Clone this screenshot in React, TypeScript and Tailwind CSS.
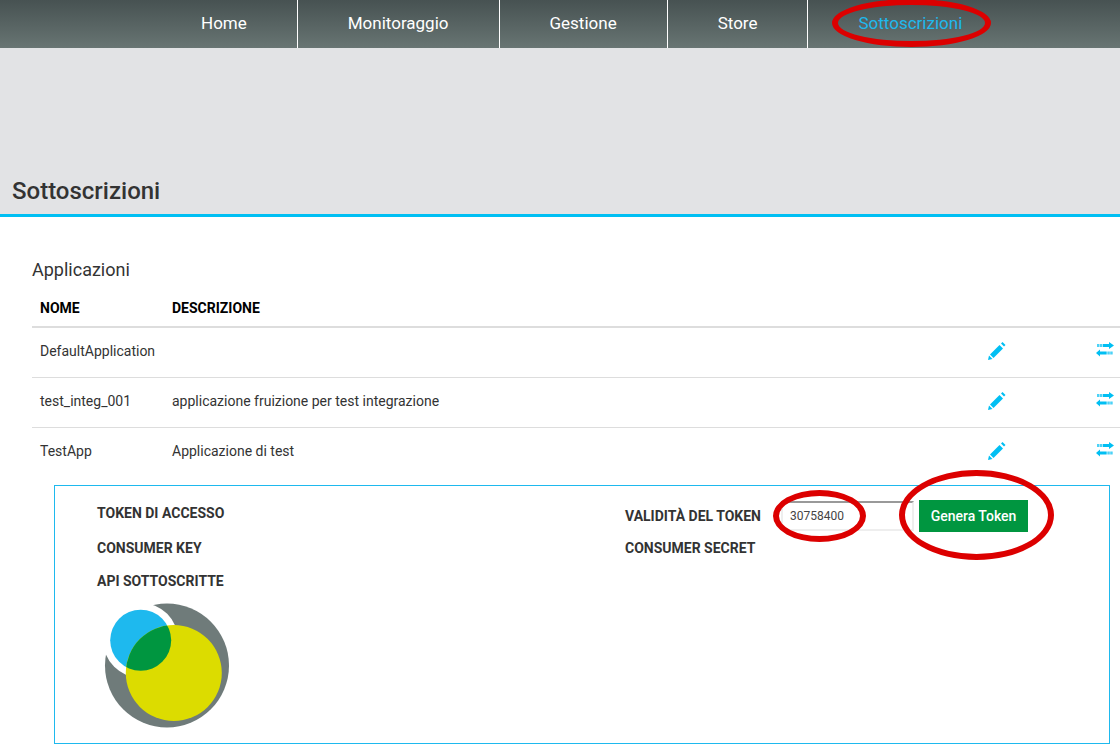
const navItems = ["Home", "Monitoraggio", "Gestione", "Store"];

const apps = [
    { name: "DefaultApplication", description: "" },
    { name: "test_integ_001", description: "applicazione fruizione per test integrazione" },
    { name: "TestApp", description: "Applicazione di test" },
];

function EditIcon() {
    return (
        <svg width="24" height="24" viewBox="0 0 24 24" fill="#00bff3">
            <path d="M4 21l1-4.5 3.5 3.5z" />
            <path d="M6 15.5L15.5 6l3.5 3.5L9.5 19z" />
            <path d="M17 4.5L18.5 3l3 3L20 7.5z" />
        </svg>
    );
}

function SwapIcon() {
    return (
        <svg width="20" height="18" viewBox="0 0 20 18" fill="#00bff3">
            <rect x="2" y="2" width="2.5" height="3" opacity="0.7" />
            <rect x="5" y="2" width="2.5" height="3" opacity="0.7" />
            <path d="M8 2h6V0l5 3.5L14 7V5H8z" />
            <path d="M11.7 9.5H5v-2L1 11l4 3.5v-2h6.7z" />
            <rect x="12.3" y="9.5" width="2.5" height="3" opacity="0.7" />
            <rect x="15.2" y="9.5" width="2.5" height="3" opacity="0.7" />
        </svg>
    );
}

function Logo() {
    return (
        <svg width="130" height="130" viewBox="0 0 130 130">
            <defs>
                <clipPath id="blue-clip">
                    <circle cx="38.7" cy="40.3" r="30.5" />
                </clipPath>
            </defs>
            <circle cx="65" cy="65.5" r="62" fill="#6f7b7a" />
            <circle cx="38.7" cy="40.3" r="37.5" fill="#ffffff" />
            <circle cx="38.7" cy="40.3" r="30.5" fill="#1eb9ee" />
            <circle cx="71.8" cy="73" r="48" fill="#dcdc00" />
            <circle cx="71.8" cy="73" r="48" fill="#009640" clipPath="url(#blue-clip)" />
        </svg>
    );
}

export default function App() {
    return (
        <div className="relative h-[750px] overflow-hidden bg-white font-['Roboto',sans-serif] text-[#333]">
            <nav className="flex h-12 bg-gradient-to-b from-[#475252] to-[#687573] pl-[151px] text-white">
                {navItems.map((item) => (
                    <a key={item} className="flex items-center border-r border-white px-[50px] text-[17px]">
                        {item}
                    </a>
                ))}
                <a className="flex items-center px-[50px] text-[17px] text-[#1eb9ee]">Sottoscrizioni</a>
            </nav>

            <header className="flex h-[169px] items-end border-b-[3px] border-[#00bff3] bg-[#e2e3e5] px-3 pb-[7px]">
                <h1 className="text-2xl font-medium text-[#333]">Sottoscrizioni</h1>
            </header>

            <main className="pl-8 pt-[41px]">
                <h2 className="text-lg font-normal leading-6">Applicazioni</h2>

                <div className="mt-1 grid h-[42px] grid-cols-[132px_812px_111px_25px] items-center border-b-2 border-[#ddd] px-2 pt-1 text-sm font-bold text-black">
                    <div>NOME</div>
                    <div>DESCRIZIONE</div>
                </div>

                {apps.map((app) => (
                    <div
                        key={app.name}
                        className="grid h-[50px] grid-cols-[132px_812px_111px_25px] items-center border-b border-[#ddd] px-2 pb-[3px] text-sm last-of-type:border-transparent"
                    >
                        <div>{app.name}</div>
                        <div>{app.description}</div>
                        <EditIcon />
                        <SwapIcon />
                    </div>
                ))}

                <section className="ml-[22px] mt-[7px] h-[259px] w-[1056px] border border-[#1eb9ee] pl-[42px] pt-[14px] text-sm font-bold">
                    <div className="flex">
                        <div className="w-[528px] pt-[3px]">TOKEN DI ACCESSO</div>
                        <div className="flex h-8 items-center">
                            <span className="w-[150px]">VALIDITÀ DEL TOKEN</span>
                            <input
                                readOnly
                                value="30758400"
                                className="ml-[6px] h-[30px] w-[133px] border-2 border-[#eee] border-t-[#999] pl-[7px] text-xs font-normal text-[#444] outline-none"
                            />
                            <button className="ml-[5px] h-8 w-[109px] bg-[#009640] text-sm font-medium text-white">Genera Token</button>
                        </div>
                    </div>
                    <div className="mt-[6px] flex">
                        <div className="w-[528px]">CONSUMER KEY</div>
                        <div>CONSUMER SECRET</div>
                    </div>
                    <div className="mt-[13px]">API SOTTOSCRITTE</div>
                    <div className="ml-[5px] mt-[9px]">
                        <Logo />
                    </div>
                </section>
            </main>

            <div className="absolute left-[832px] top-[-1px] h-[48px] w-[159px] rounded-[50%] border-[6px] border-[#dc0000]" />
            <div className="absolute left-[773px] top-[490px] h-[52px] w-[93px] rounded-[50%] border-[6px] border-[#dc0000]" />
            <div className="absolute left-[899px] top-[470px] h-[90px] w-[155px] rounded-[50%] border-[6px] border-[#dc0000]" />
        </div>
    );
}
